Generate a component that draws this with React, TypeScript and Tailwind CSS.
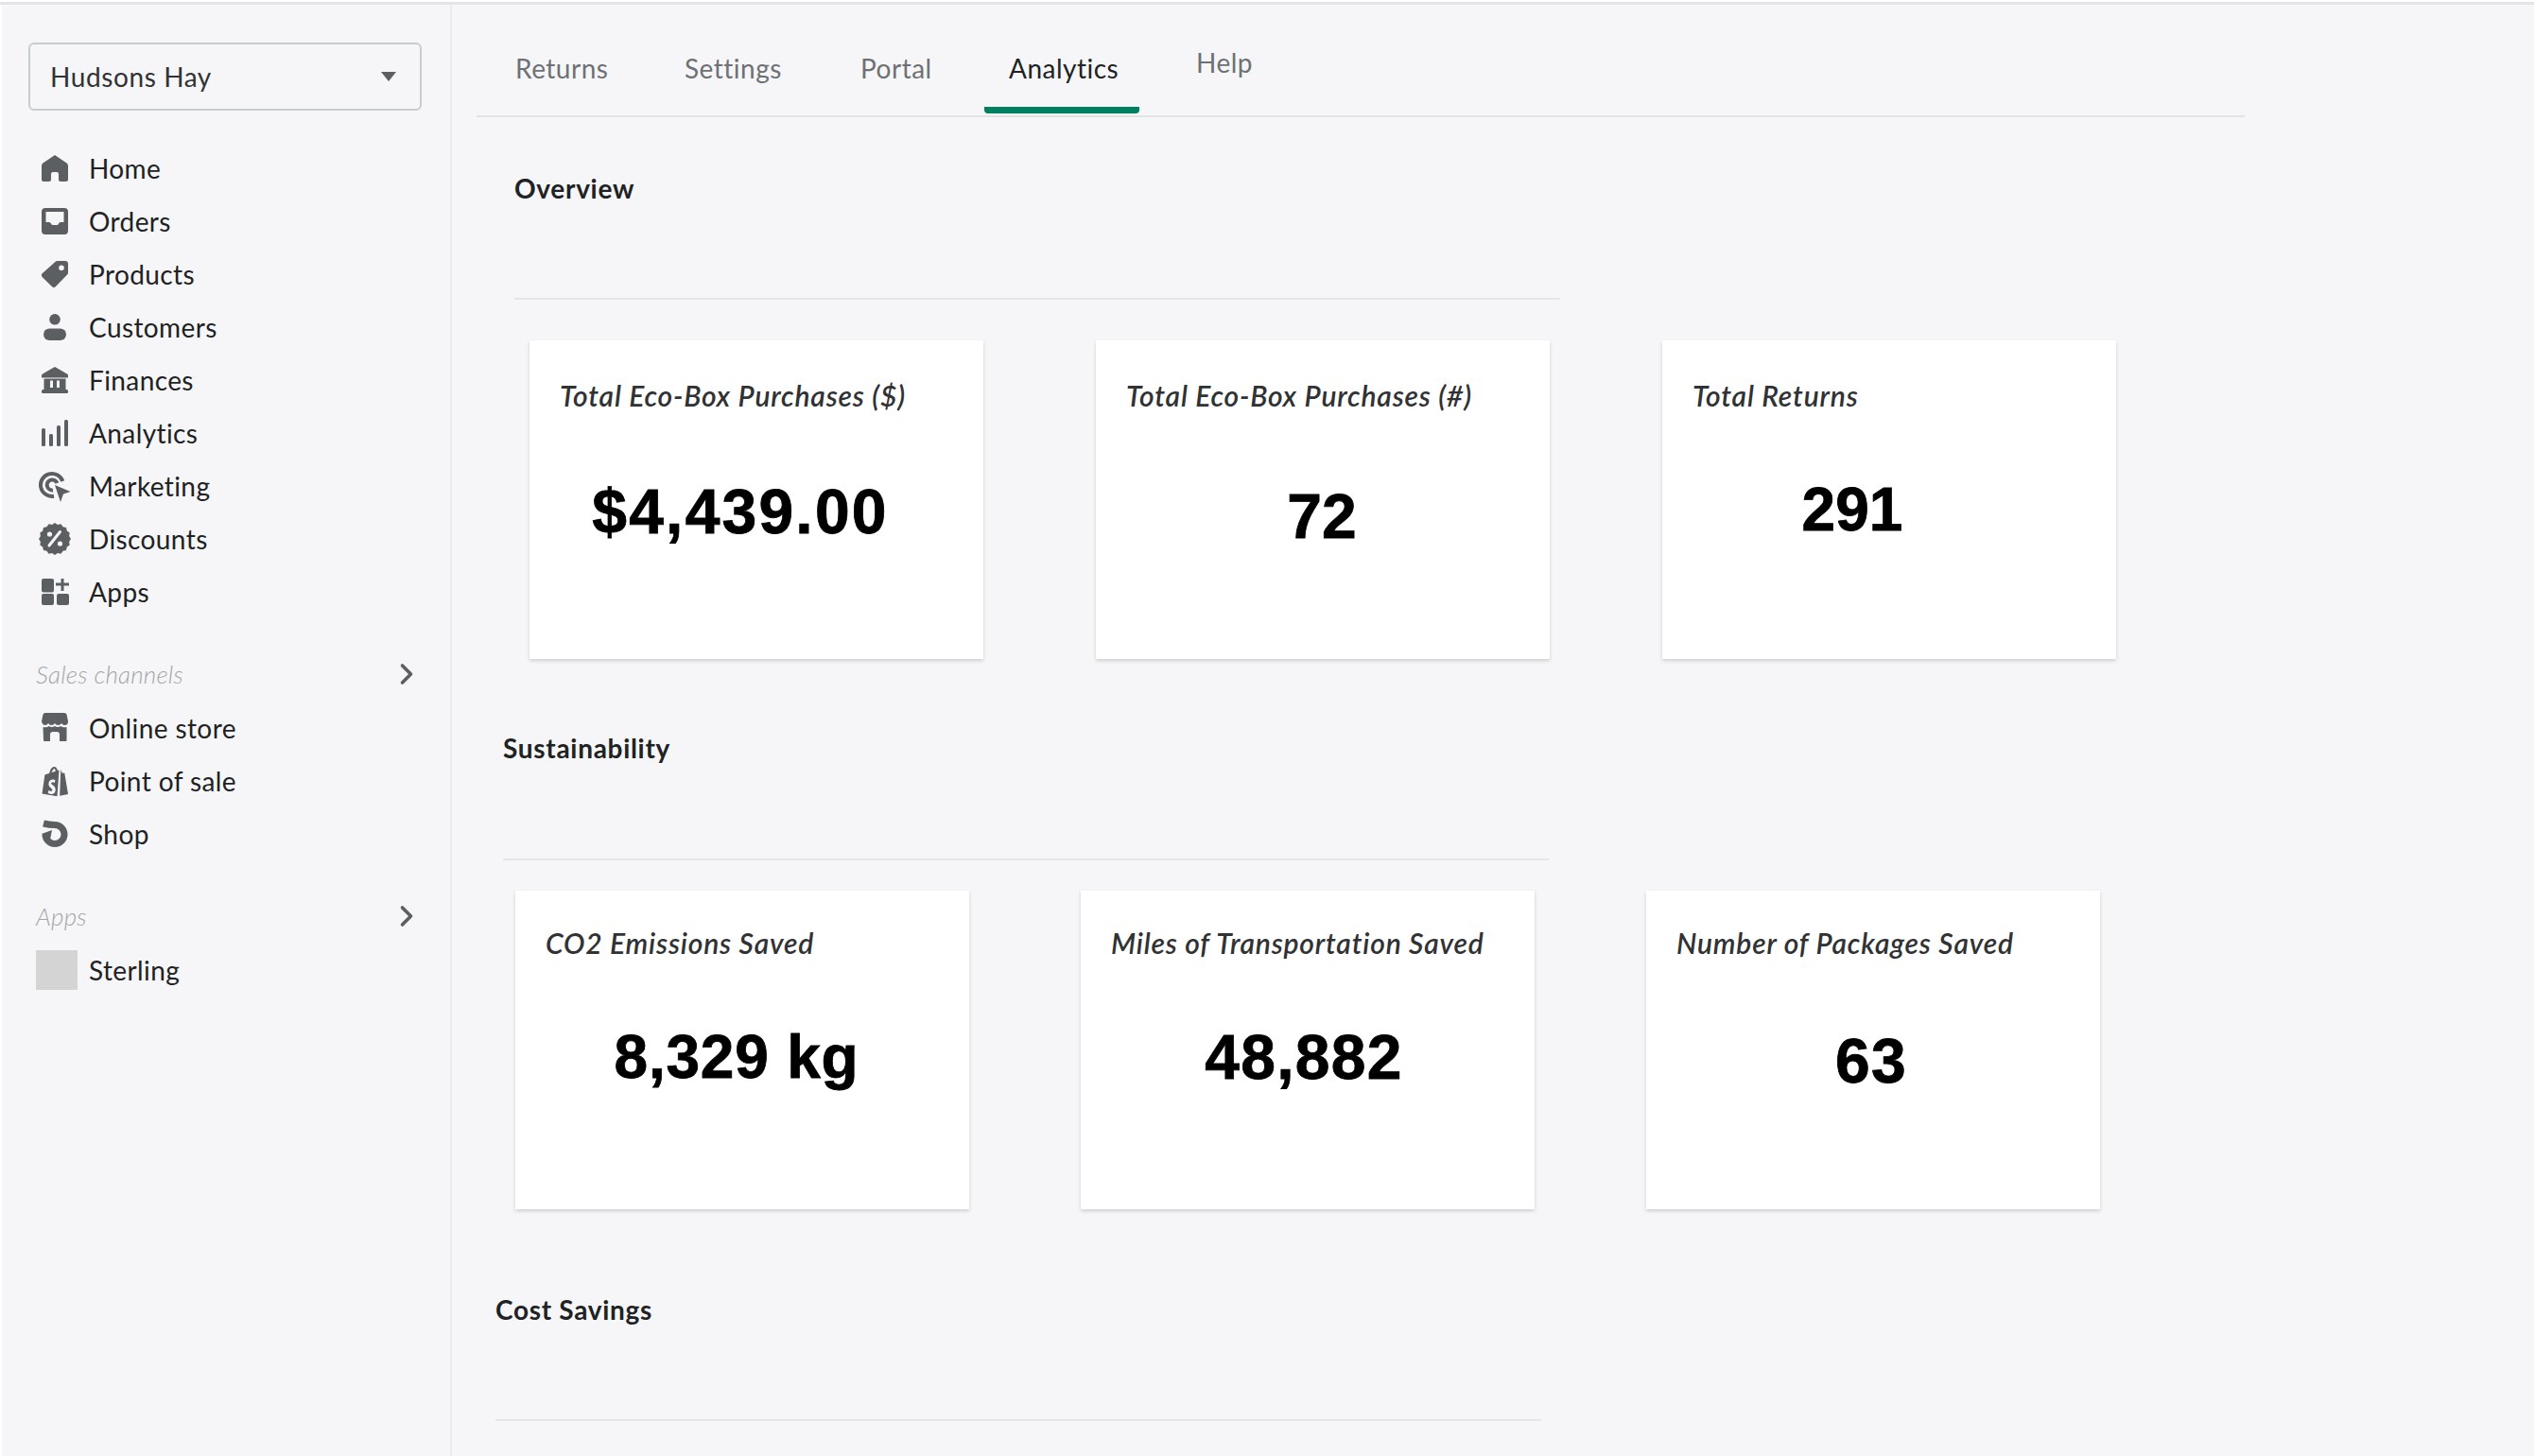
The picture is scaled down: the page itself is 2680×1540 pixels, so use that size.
import { ChevronRight } from "lucide-react";
import type { ReactNode } from "react";

const ink = "#5c5f62";
const bg = "#f6f6f8";

const Icon = ({ children }: { children: ReactNode }) => (
  <svg viewBox="0 0 28 28" className="w-7 h-7 shrink-0 overflow-visible" fill={ink} fillRule="evenodd">
    {children}
  </svg>
);

// marketing and discounts stick out past the other icons
const BigIcon = ({ children }: { children: ReactNode }) => (
  <svg viewBox="0 0 34 34" className="w-[34px] h-[34px] -mx-[3px] shrink-0" fill={ink} fillRule="evenodd">
    {children}
  </svg>
);

const scallop = () => {
  let d = "";
  for (let i = 0; i < 32; i++) {
    const a = (i / 32) * Math.PI * 2;
    const r = i % 2 === 0 ? 17 : 15.4;
    d += (i === 0 ? "M" : "L") + (17 + r * Math.cos(a)).toFixed(2) + " " + (17 + r * Math.sin(a)).toFixed(2);
  }
  return d + "Z";
};

const navTop = [
  {
    label: "Home",
    icon: <Icon><path d="M14 0l12.6 8.6q1.4 1 1.4 2.9V26q0 2-2 2h-6q-2 0-2-2v-6q0-2-2-2h-4q-2 0-2 2v6q0 2-2 2H2q-2 0-2-2V11.500q0-1.900 1.400-2.900z" /></Icon>,
  },
  {
    label: "Orders",
    icon: <Icon><path d="M4 0h20a4 4 0 0 1 4 4v20a4 4 0 0 1-4 4H4a4 4 0 0 1-4-4V4a4 4 0 0 1 4-4zM4.500 4v11H8q1.500 0 2 1.500t2 1.500h4q1.500 0 2-1.500t2-1.500h3.500V4z" /></Icon>,
  },
  {
    label: "Products",
    icon: <Icon><path d="M16.500 0H25a3 3 0 0 1 3 3v9.500a3 3 0 0 1-.9 2.100L15 27.100a3 3 0 0 1-4.200 0L.9 17.200a3 3 0 0 1 0-4.200L14.400.900A3 3 0 0 1 16.500 0zM21 4.500a2.800 2.800 0 1 0 0 5.600 2.800 2.800 0 0 0 0-5.600z" /></Icon>,
  },
  {
    label: "Customers",
    icon: (
      <Icon>
        <circle cx="14" cy="5.800" r="5.800" />
        <rect x="2" y="15.500" width="24" height="12.500" rx="6.250" />
      </Icon>
    ),
  },
  {
    label: "Finances",
    icon: (
      <Icon>
        <path d="M14 0l13 7.500q1 .6 1 1.500v2.500H0V9q0-.9 1-1.500z" />
        <path d="M2.500 12.500h23V24h-23zM9 14.500V22h3v-7.500zM16 14.500V22h3v-7.500z" />
        <rect x="0" y="24" width="28" height="4" rx="1.500" />
      </Icon>
    ),
  },
  {
    label: "Analytics",
    icon: (
      <Icon>
        <rect x="0" y="9" width="4" height="19" rx="1.500" />
        <rect x="8" y="15" width="4" height="13" rx="1.500" />
        <rect x="16" y="6" width="4" height="22" rx="1.500" />
        <rect x="24" y="0" width="4" height="28" rx="1.500" />
      </Icon>
    ),
  },
  {
    label: "Marketing",
    icon: (
      <BigIcon>
        <path d="M25.300 12A12 12 0 1 0 16 27.800" fill="none" stroke={ink} strokeWidth="4" />
        <path d="M19.400 14A5.500 5.500 0 1 0 15 21.400" fill="none" stroke={ink} strokeWidth="4" />
        <path d="M17 16l16.500 7-7.500 2.500-3 8.500z" />
      </BigIcon>
    ),
  },
  {
    label: "Discounts",
    icon: (
      <BigIcon>
        <path d={scallop()} />
        <path d="M22.500 9.500L11 24" stroke={bg} strokeWidth="3" strokeLinecap="round" />
        <circle cx="11.500" cy="12" r="2.600" fill={bg} />
        <circle cx="22.500" cy="22" r="2.600" fill={bg} />
      </BigIcon>
    ),
  },
  {
    label: "Apps",
    icon: (
      <Icon>
        <rect x="0" y="0" width="13" height="14.500" rx="2" />
        <rect x="0" y="16" width="13" height="12" rx="2" />
        <rect x="16" y="16" width="13" height="12" rx="2" />
        <path d="M20.500 0h3v4.500H29v3h-5.500V13h-3V7.500H15v-3h5.500z" />
      </Icon>
    ),
  },
];

const navChannels = [
  {
    label: "Online store",
    icon: (
      <Icon>
        <path d="M4-2h20q2 0 2.500 1.500L28 7q0 4-3.500 4-2.500 0-3.500-2-1 2-3.500 2T14 9q-1 2-3.500 2T7 9q-1 2-3.500 2T0 7L1.500-.5Q2-2 4-2z" />
        <path d="M1.500 13q4 .8 6.200-1 3.200 2 6.300 0 3.100 2 6.300 0 2.200 1.800 6.200 1v14q0 1-1 1h-6.500v-7q0-3-3-3h-4q-3 0-3 3v7h-6q-1 0-1-1z" />
      </Icon>
    ),
  },
  {
    label: "Point of sale",
    icon: (
      <Icon>
        <g transform="translate(0 -1) scale(1 1.100)">
          <path d="M18.500 3.200l-1.500.5C16.300 1.400 15 0 13.400 0 10.800 0 8.900 3 8.300 6.200L3.400 7.700.5 26l16 2.500zM10.700 5.500c.6-2.300 1.700-3.500 2.900-3.700.7.700 1 1.700 1.200 2.500zM14.500 12.700l-.8 2.700q-1.400-.7-2.600-.5-1.200.2-1.100 1.100c.1 1.400 4.700 2.100 4.700 6q0 3.900-4 4.300-2.400.1-4-1l.8-2.900q1.500 1.200 2.800 1.100 1-.1 1-1.100c0-1.900-3.800-2.200-3.900-5.700q0-3.900 4-4.500 1.500-.2 2.100.5z" />
          <path d="M20.200 2.700l1.400 3.100 2.700.3 3.700 20.200-8.800 1.700z" />
        </g>
      </Icon>
    ),
  },
  {
    label: "Shop",
    icon: (
      <Icon>
        <path d="M2 3Q8 4.500 14 4.500A10 10 0 1 1 4 14.500" fill="none" stroke={ink} strokeWidth="7" />
        <path d="M0 14l11-4-2 10z" />
      </Icon>
    ),
  },
];

const NavRow = ({ label, icon }: { label: string; icon: ReactNode }) => (
  <div className="flex items-center h-14 pl-[14px]">
    {icon}
    <span className="ml-[22px] text-[28px] tracking-[0.4px] text-[#202223]">{label}</span>
  </div>
);

const GroupHead = ({ label }: { label: string }) => (
  <div className="flex items-center justify-between h-[30px] pl-[8px] italic font-light text-[26px] tracking-[0.2px] text-[#a3a5a8]">
    <span>{label}</span>
    <ChevronRight className="w-[36px] h-[36px] -mr-[2px] text-[#5c5f62]" strokeWidth={2.4} />
  </div>
);

const overview = [
  { title: "Total Eco-Box Purchases ($)", value: "$4,439.00", top: "pt-[40px]", cls: "pr-[34px] mt-[65px] text-[66px] tracking-[2.2px]" },
  { title: "Total Eco-Box Purchases (#)", value: "72", top: "pt-[40px]", cls: "pr-[2px] mt-[70px] text-[66px]" },
  { title: "Total Returns", value: "291", top: "pt-[40px]", cls: "pr-[78px] mt-[63px] text-[64px]" },
];

const sustain = [
  { title: "CO2 Emissions Saved", value: "8,329 kg", top: "pt-[37px]", cls: "pr-[12px] mt-[63px] text-[64px] tracking-[0.8px]" },
  { title: "Miles of Transportation Saved", value: "48,882", top: "pt-[37px]", cls: "pr-[8px] mt-[63px] text-[66px] tracking-[1.3px]" },
  { title: "Number of Packages Saved", value: "63", top: "pt-[37px]", cls: "pr-[4px] mt-[67px] text-[66px] tracking-[1.3px]" },
];

const Card = ({ title, value, top, cls }: { title: string; value: string; top: string; cls: string }) => (
  <div className={"w-[480px] h-[337px] shrink-0 bg-white shadow-[0_2px_4px_rgba(0,0,0,0.16)] " + top}>
    <div className="pl-[32px] h-[36px] leading-[36px] italic font-semibold text-[30px] tracking-[0.8px] text-[#303234]">{title}</div>
    <div className={"flex justify-center leading-[80px] font-bold text-black [-webkit-text-stroke:0.8px_black] font-['Liberation_Sans',Arial,sans-serif] " + cls}>{value}</div>
  </div>
);

const Section = ({ title, cls }: { title: string; cls: string }) => (
  <div className={"w-[1106px] border-b-2 border-[#e4e5e7] " + cls}>
    <div className="leading-[40px] font-bold text-[28px] tracking-[0.7px] text-[#202223]">{title}</div>
  </div>
);

const tabs = [
  { label: "Returns", cls: "w-[179px] pl-[41px] text-[#6d7175]" },
  { label: "Settings", cls: "w-[187px] pl-[41px] text-[#6d7175]" },
  { label: "Portal", cls: "w-[158px] pl-[40px] text-[#6d7175]" },
];

export default function App() {
  return (
    <div className="h-[1540px] overflow-hidden bg-[#f6f6f8] font-['Lato','Noto_Sans',sans-serif]">
      <div className="h-[5px] border-b-[3px] border-[#e3e4e6] bg-white" />
      <div className="flex h-[1535px]">
        <aside className="w-[478px] shrink-0 h-full border-r-2 border-[#ebebed] border-l-2 border-l-white pl-[28px] pr-[30px] pt-[40px]">
          <div className="flex items-center justify-between h-[72px] rounded-[6px] border-2 border-[#c9cccf] pl-[21px] pr-[25px] text-[28px] tracking-[0.6px] text-[#303234]">
            <span>Hudsons Hay</span>
            <svg viewBox="0 0 16 10" className="w-4 h-[10px]" fill={ink}>
              <path d="M0 0h16L8 10z" />
            </svg>
          </div>
          <div className="mt-[33px]">
            {navTop.map((n) => (
              <NavRow key={n.label} label={n.label} icon={n.icon} />
            ))}
          </div>
          <div className="mt-[44px] mb-[14px]">
            <GroupHead label="Sales channels" />
          </div>
          {navChannels.map((n) => (
            <NavRow key={n.label} label={n.label} icon={n.icon} />
          ))}
          <div className="mt-[44px] mb-[14px]">
            <GroupHead label="Apps" />
          </div>
          <div className="flex items-center h-14 pl-[8px]">
            <div className="w-[44px] h-[42px] bg-[#d4d4d4]" />
            <span className="ml-[12px] text-[28px] tracking-[0.4px] text-[#202223]">Sterling</span>
          </div>
        </aside>

        <main className="flex-1 pl-[26px]">
          <div className="relative flex items-center w-[1870px] h-[119px] border-b-2 border-[#e1e3e5] text-[28px] tracking-[0.5px] pt-[16px]">
            {tabs.map((t) => (
              <div key={t.label} className={t.cls}>{t.label}</div>
            ))}
            <div className="w-[165px] pl-[39px] text-[#202223]">Analytics</div>
            <div className="ml-[72px] mb-[12px] text-[#6d7175]">Help</div>
            <div className="absolute left-[537px] bottom-[2px] w-[164px] h-[7px] rounded-b-[4px] bg-[#008060]" />
          </div>

          <Section title="Overview" cls="ml-[40px] mt-[55px] h-[138px]" />
          <div className="flex gap-[119px] ml-[56px] mt-[43px]">
            {overview.map((c) => (
              <Card key={c.title} {...c} />
            ))}
          </div>

          <Section title="Sustainability" cls="ml-[28px] mt-[74px] h-[139px]" />
          <div className="flex gap-[118px] ml-[41px] mt-[32px]">
            {sustain.map((c) => (
              <Card key={c.title} {...c} />
            ))}
          </div>

          <Section title="Cost Savings" cls="ml-[20px] mt-[86px] h-[138px]" />
        </main>
      </div>
    </div>
  );
}
